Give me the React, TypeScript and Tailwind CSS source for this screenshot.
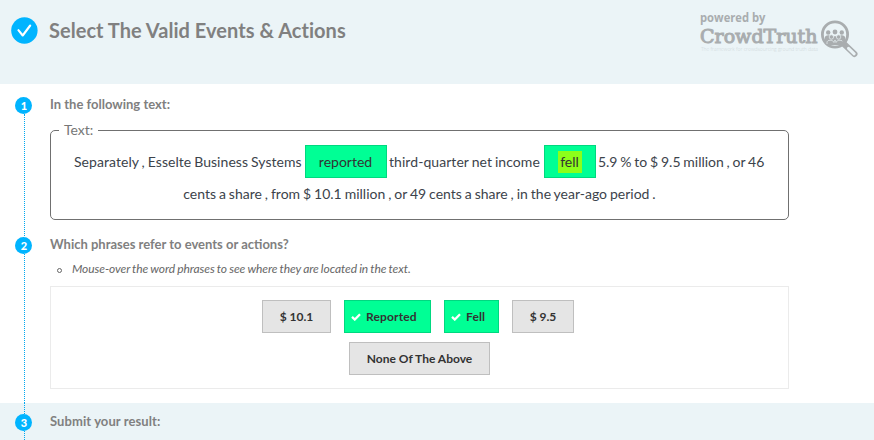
import type { ReactNode } from "react";

function Rail({ n, lead = false }: { n: number; lead?: boolean }) {
  return (
    <div className="flex w-[17px] shrink-0 flex-col items-center">
      {lead && <span className="ml-px h-[11px] border-l border-dotted border-[#00a8f0]" />}
      <span className="flex h-[17px] w-[17px] shrink-0 items-center justify-center rounded-full bg-[#00b4ff] pl-px text-[11px] leading-[17px] font-black text-white">
        {n}
      </span>
      <span className="ml-px w-px flex-1 border-l border-dotted border-[#00a8f0]" />
    </div>
  );
}

function Heading({ children }: { children: ReactNode }) {
  return <h2 className="h-4 text-[13px] leading-4 font-bold whitespace-nowrap text-[#808080]">{children}</h2>;
}

function Check() {
  return (
    <svg width="10" height="8" viewBox="0 0 10 8" fill="none" className="shrink-0">
      <path d="M1 3.8 3.8 6.5 9 1.3" stroke="#fff" strokeWidth="2.3" />
    </svg>
  );
}

function Choice({ label, className, checked = false }: { label: string; className: string; checked?: boolean }) {
  return (
    <button
      className={`flex h-[33px] items-center border text-[12px] leading-4 font-bold whitespace-nowrap text-[#333] ${
        checked ? "gap-[5px] border-[#00d880] bg-[#00ff95] pl-[6px] tracking-[0.15px]" : "justify-center border-[#bfbfbf] bg-[#e5e5e5]"
      } ${className}`}
    >
      {checked && <Check />}
      <span>{label}</span>
    </button>
  );
}

function Logo() {
  return (
    <svg width="164" height="56" viewBox="0 -6 164 56" className="shrink-0">
      <g fill="#a9adaf">
        <text x="0" y="11.3" fontFamily="'Open Sans', sans-serif" fontWeight="700" fontSize="12" textLength="65.5" lengthAdjust="spacingAndGlyphs">
          powered by
        </text>
        <text x="0" y="31.5" fontFamily="'DejaVu Serif', serif" fontWeight="400" fontSize="19" stroke="#a9adaf" strokeWidth="1" textLength="117.5" lengthAdjust="spacingAndGlyphs">
          CrowdTruth
        </text>
        <text x="1" y="39.5" fill="#cdd4d7" fontFamily="'Open Sans', sans-serif" fontWeight="300" fontSize="5.5" textLength="117" lengthAdjust="spacingAndGlyphs">
          The framework for crowdsourcing ground truth data
        </text>
        <circle cx="135" cy="23.5" r="12.6" fill="none" stroke="#a9adaf" strokeWidth="2.8" />
        <circle cx="128.2" cy="21.5" r="2.2" />
        <circle cx="135" cy="21" r="2.4" />
        <circle cx="141.8" cy="21.5" r="2.2" />
        <path d="M124.8 30v-3c0-3.600 5.400-3.600 6.400-1.200l1 1c1-2 4.600-2 5.600 0l1-1c1-2.400 6.400-2.400 6.400 1.200v3l-3.200 4h-14Z" />
        <circle cx="131.4" cy="26" r="2.2" stroke="#ebf4f7" strokeWidth=".7" />
        <circle cx="138.6" cy="26" r="2.2" stroke="#ebf4f7" strokeWidth=".7" />
        <path d="M127 33v-1.500c0-3 6-3 7 0 1-3.500 1-3.500 2 0 1-3 7-3 7 0V33" fill="none" stroke="#ebf4f7" strokeWidth=".7" />
      </g>
      <path d="M144 33 154.500 43" stroke="#a9adaf" strokeWidth="6" strokeLinecap="round" />
      <path d="m148.500 37.300 5.700 5.500" stroke="#ebf4f7" strokeWidth="3" strokeLinecap="round" />
    </svg>
  );
}

export default function App() {
  return (
    <div className="flex h-[440px] w-[874px] flex-col overflow-hidden bg-white font-['Lato',sans-serif]">
      <header className="flex h-[84px] shrink-0 items-start bg-[#ebf4f7] pl-[11px]">
        <svg width="27" height="27" viewBox="0 0 27 27" className="mt-[17px] shrink-0">
          <circle cx="13.4" cy="13.5" r="13.2" fill="#00b4ff" />
          <path d="m7.4 13.2 4.3 5.3 7.5-10" fill="none" stroke="#fff" strokeWidth="2.1" strokeLinecap="round" strokeLinejoin="round" />
        </svg>
        <h1 className="mt-[18px] ml-[11px] w-[651px] text-[20px] leading-6 font-bold tracking-[0.035px] text-[#808080]">Select The Valid Events &amp; Actions</h1>
        <div className="mt-[5px]">
          <Logo />
        </div>
      </header>

      <main className="flex h-[319px] shrink-0 flex-col pt-[12px] pl-[15px]">
        <section className="flex h-[140px]">
          <div className="flex pt-px">
            <Rail n={1} />
          </div>
          <div className="ml-[18px] w-[739px]">
            <Heading>In the following text:</Heading>
            <fieldset className="mt-[9px] h-[99px] rounded-[5px] border border-[#707070]">
              <legend className="ml-[8px] h-[18px] w-[39px] pl-[5px] text-[14px] leading-[18px] text-[#777]">Text:</legend>
              <div className="mt-[6px] flex h-[33px] items-center pl-[23px] text-[14px] whitespace-nowrap text-[#3c434b] [word-spacing:-0.7px]">
                <span className="w-[231px] tracking-[0.05px]">Separately , Esselte Business Systems</span>
                <span className="flex h-[33px] w-[82px] items-center justify-center border border-[#00d880] bg-[#00ff95] pr-px text-[#333]">reported</span>
                <span className="w-[157px] pl-[2px] tracking-[0.06px]">third-quarter net income</span>
                <span className="flex h-[33px] w-[52px] items-center justify-center border border-[#00d880] bg-[#00ff95] text-[#333]">
                  <span className="h-[22px] w-[24px] bg-[#8cff1a] pr-px text-center leading-[22px]">fell</span>
                </span>
                <span className="w-[168px] pl-[2px] tracking-[-0.03px]">5.9 % to $ 9.5 million , or 46</span>
              </div>
              <p className="mt-[6px] text-center text-[14px] leading-5 text-[#3c434b] [word-spacing:-0.66px]">
                cents a share , from $ 10.1 million , or 49 cents a share , in the year-ago period .
              </p>
            </fieldset>
          </div>
        </section>

        <section className="flex h-[167px]">
          <div className="flex pt-px">
            <Rail n={2} />
          </div>
          <div className="ml-[18px] w-[739px]">
            <Heading>Which phrases refer to events or actions?</Heading>
            <div className="mt-[9px] flex h-4 items-center pl-[7px] text-[12px] tracking-[-0.08px] text-[#666] italic [word-spacing:-0.5px]">
              <span className="mt-[2px] mr-[10px] h-[5px] w-[5px] rounded-full border border-[#666]" />
              Mouse-over the word phrases to see where they are located in the text.
            </div>
            <div className="mt-[9px] flex h-[103px] flex-col items-center gap-[9px] border border-[#ebebeb] pt-[13px]">
              <div className="mr-[3px] flex gap-[13px]">
                <Choice label="$ 10.1" className="w-[69px]" />
                <Choice label="Reported" className="w-[87px]" checked />
                <Choice label="Fell" className="w-[55px]" checked />
                <Choice label="$ 9.5" className="w-[62px]" />
              </div>
              <Choice label="None Of The Above" className="w-[141px]" />
            </div>
          </div>
        </section>
      </main>

      <footer className="flex h-[37px] shrink-0 bg-[#ebf4f7] pl-[15px]">
        <Rail n={3} lead />
        <div className="mt-[10px] ml-[18px] tracking-[0.08px]">
          <Heading>Submit your result:</Heading>
        </div>
      </footer>
    </div>
  );
}
